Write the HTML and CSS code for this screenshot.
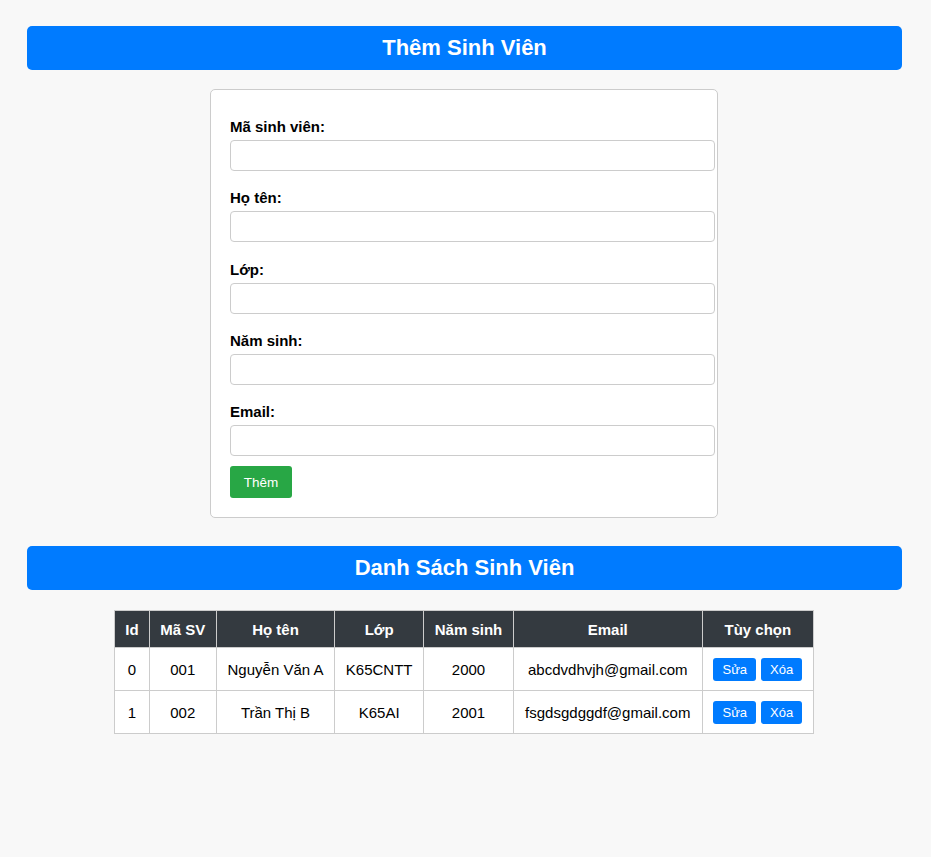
FILE: index.html
```html
<!DOCTYPE html>
<html lang="vi">
<head>
<meta charset="utf-8">
<title>Quản lý sinh viên</title>
<link rel="stylesheet" href="styles.css">
</head>
<body>
<div class="page">
  <h2 class="banner">Thêm Sinh Viên</h2>
  <form class="card">
    <div class="group">
      <label class="label" for="masv">Mã sinh viên:</label>
      <input class="input" id="masv" type="text">
    </div>
    <div class="group">
      <label class="label" for="hoten">Họ tên:</label>
      <input class="input" id="hoten" type="text">
    </div>
    <div class="group">
      <label class="label" for="lop">Lớp:</label>
      <input class="input" id="lop" type="text">
    </div>
    <div class="group">
      <label class="label" for="namsinh">Năm sinh:</label>
      <input class="input" id="namsinh" type="text">
    </div>
    <div class="group last">
      <label class="label" for="email">Email:</label>
      <input class="input" id="email" type="text">
    </div>
    <button class="btn-add" type="button">Thêm</button>
  </form>

  <h2 class="banner banner-list">Danh Sách Sinh Viên</h2>
  <table class="table">
    <thead>
      <tr>
        <th>Id</th>
        <th>Mã SV</th>
        <th>Họ tên</th>
        <th>Lớp</th>
        <th>Năm sinh</th>
        <th>Email</th>
        <th>Tùy chọn</th>
      </tr>
    </thead>
    <tbody>
      <tr>
        <td>0</td>
        <td>001</td>
        <td>Nguyễn Văn A</td>
        <td>K65CNTT</td>
        <td>2000</td>
        <td>abcdvdhvjh@gmail.com</td>
        <td><div class="actions"><button class="btn-sm" type="button">Sửa</button><button class="btn-sm" type="button">Xóa</button></div></td>
      </tr>
      <tr>
        <td>1</td>
        <td>002</td>
        <td>Trần Thị B</td>
        <td>K65AI</td>
        <td>2001</td>
        <td>fsgdsgdggdf@gmail.com</td>
        <td><div class="actions"><button class="btn-sm" type="button">Sửa</button><button class="btn-sm" type="button">Xóa</button></div></td>
      </tr>
    </tbody>
  </table>
</div>
</body>
</html>
```
FILE: styles.css
```css
html, body {
  margin: 0;
  padding: 0;
  background: #f8f8f8;
  font-family: "Liberation Sans", Arial, sans-serif;
  color: #000;
}

.page {
  padding: 26px 29px 40px 27px;
}

.banner {
  margin: 0;
  height: 44px;
  line-height: 44px;
  background: #007bff;
  color: #fff;
  border-radius: 5px;
  text-align: center;
  font-size: 22px;
  font-weight: bold;
}

.banner-list {
  margin-top: 28px;
}

.card {
  box-sizing: border-box;
  width: 508px;
  margin: 19px auto 0 183px;
  background: #fff;
  border: 1px solid #ccc;
  border-radius: 5px;
  padding: 28px 20px 19px 19px;
}

.group {
  margin-bottom: 18.25px;
}

.group.last {
  margin-bottom: 10px;
}

.label {
  display: block;
  font-size: 15px;
  line-height: 17px;
  font-weight: bold;
  margin-bottom: 5px;
}

.input {
  display: block;
  box-sizing: border-box;
  width: 485px;
  height: 31px;
  margin: 0;
  padding: 6px 8px;
  border: 1px solid #ccc;
  border-radius: 4px;
  background: #fff;
  font-family: "Liberation Sans", Arial, sans-serif;
  font-size: 14px;
}

.btn-add {
  display: block;
  box-sizing: border-box;
  width: 62px;
  height: 32px;
  padding: 0;
  border: none;
  border-radius: 3px;
  background: #28a745;
  color: #fff;
  font-family: "Liberation Sans", Arial, sans-serif;
  font-size: 13.5px;
}

.table {
  width: 700px;
  margin: 20px auto 0 87px;
  border-collapse: collapse;
  background: #fff;
}

.table th,
.table td {
  border: 1px solid #ccc;
  padding: 9.5px 10px;
  text-align: center;
  font-size: 15px;
  line-height: 17px;
  vertical-align: middle;
}

.table th {
  background: #343a40;
  color: #fff;
  font-weight: bold;
}

.table td {
  white-space: nowrap;
}

.actions {
  display: flex;
  justify-content: center;
  gap: 5px;
  height: 23px;
}

.btn-sm {
  display: block;
  box-sizing: border-box;
  height: 23px;
  padding: 0 9px;
  border: none;
  border-radius: 3px;
  background: #007bff;
  color: #fff;
  font-family: "Liberation Sans", Arial, sans-serif;
  font-size: 13px;
  line-height: 23px;
}
```
